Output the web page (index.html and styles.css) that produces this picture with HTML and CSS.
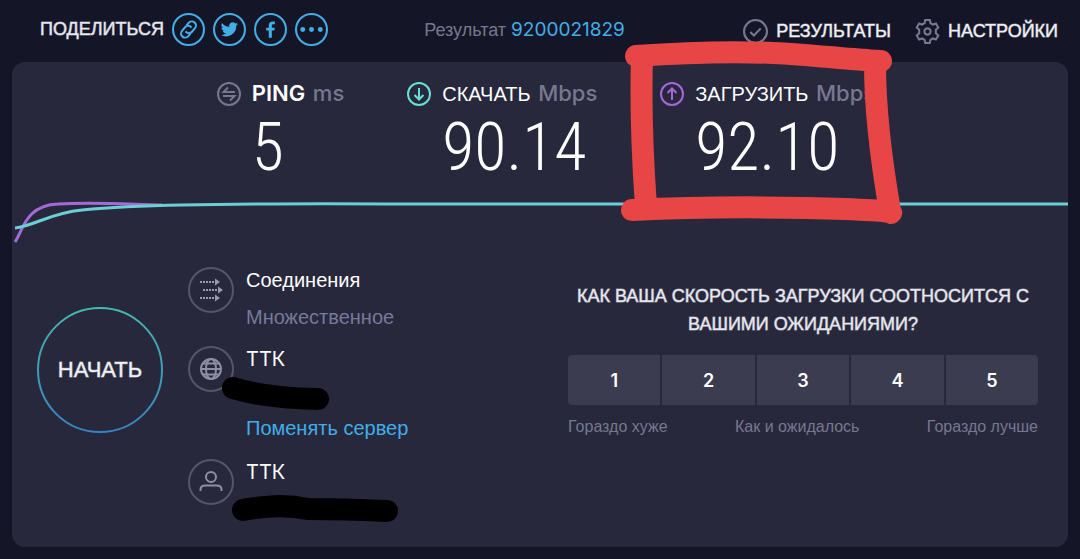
FILE: index.html
```html
<!DOCTYPE html>
<html lang="ru">
<head>
  <meta charset="UTF-8">
  <meta name="viewport" content="width=device-width, initial-scale=1.0">
  <title>Speedtest</title>
  <link rel="stylesheet" href="styles.css">
</head>
<body>
  <header class="topbar">
    <div class="share">
      <span class="share-title">ПОДЕЛИТЬСЯ</span>
      <a class="share-link" href="#" aria-label="Ссылка">
        <svg viewBox="0 0 32 32"><circle cx="16" cy="16" r="15"/><g transform="rotate(-50 16 16)"><path d="M14.500 20h-3.500a4 4 0 0 1 0-8h4.500a4 4 0 0 1 3.800 5"/><path d="M17.500 12h3.500a4 4 0 0 1 0 8h-4.500a4 4 0 0 1-3.800-5"/></g></svg>
      </a>
      <a class="share-link" href="#" aria-label="Twitter">
        <svg viewBox="0 0 32 32"><circle cx="16" cy="16" r="15"/><path class="solid" transform="translate(7.500 7.500) scale(.7)" d="M24 4.600a10 10 0 0 1-2.800.8 5 5 0 0 0 2.100-2.700 10 10 0 0 1-3.100 1.200A4.900 4.900 0 0 0 11.800 8.400 14 14 0 0 1 1.700 3.200a4.900 4.900 0 0 0 1.500 6.600 5 5 0 0 1-2.200-.6 4.900 4.900 0 0 0 3.900 4.900 5 5 0 0 1-2.200.1 4.900 4.900 0 0 0 4.600 3.400A9.900 9.900 0 0 1 0 19.500 14 14 0 0 0 21.500 7.100 10 10 0 0 0 24 4.600z"/></svg>
      </a>
      <a class="share-link" href="#" aria-label="Facebook">
        <svg viewBox="0 0 32 32"><circle cx="16" cy="16" r="15"/><path class="solid" d="M14.300 24v-7h-2.500v-2.800h2.500v-2c0-2.700 1.500-4 3.900-4l2 .1v2.600h-1.400c-1.200 0-1.500.6-1.500 1.400v1.900h2.900l-.4 2.800h-2.500v7z"/></svg>
      </a>
      <a class="share-link" href="#" aria-label="Ещё">
        <svg viewBox="0 0 32 32"><circle cx="16" cy="16" r="15"/><g class="solid"><circle cx="7.500" cy="16" r="2.400"/><circle cx="16" cy="16" r="2.400"/><circle cx="24.500" cy="16" r="2.400"/></g></svg>
      </a>
    </div>
    <div class="result-id">Результат <a href="#">9200021829</a></div>
    <nav class="menu">
      <a href="#">
        <svg viewBox="0 0 24 24"><circle cx="12" cy="12" r="11"/><path d="M7 12.500l3.500 3.300L17 9"/></svg>
        РЕЗУЛЬТАТЫ
      </a>
      <a href="#">
        <svg viewBox="0 0 24 24"><circle cx="12" cy="12" r="3"/><path d="M9.800 1h4.400l.6 3 2.300 1.300 3-1 2.200 3.800-2.300 2.100v3.600l2.300 2.100-2.200 3.800-3-1-2.300 1.300-.6 3H9.800l-.6-3-2.300-1.300-3 1-2.200-3.800L4 13.800v-3.600L1.700 8.100l2.200-3.800 3 1L9.200 4z"/></svg>
        НАСТРОЙКИ
      </a>
    </nav>
  </header>

  <main class="panel">
    <section class="metrics">
      <div class="metric ping">
        <svg class="metric-icon" viewBox="0 0 24 24"><circle cx="12" cy="12" r="11"/><path d="M18 10H6.500L11 5.500M6 14h11.500L13 18.500"/></svg>
        <h2><span class="latin">PING</span> <small>ms</small></h2>
        <div class="value">5</div>
      </div>
      <div class="metric download">
        <svg class="metric-icon" viewBox="0 0 24 24"><circle cx="12" cy="12" r="11"/><path d="M12 6v11.500M7.500 13l4.500 4.500 4.500-4.500"/></svg>
        <h2>СКАЧАТЬ <small>Mbps</small></h2>
        <div class="value">90.14</div>
      </div>
      <div class="metric upload">
        <svg class="metric-icon" viewBox="0 0 24 24"><circle cx="12" cy="12" r="11"/><path d="M12 18V6.500M7.500 11L12 6.500l4.500 4.500"/></svg>
        <h2>ЗАГРУЗИТЬ <small>Mbps</small></h2>
        <div class="value">92.10</div>
        <svg class="marker" viewBox="0 0 300 200"><path d="M21 22Q120 15 190 21T266 27M27 23Q25 90 31 172M260 30C260 70 266 125 275 177M17 176Q100 172 190 174T276 179"/></svg>
      </div>
    </section>

    <svg class="chart" viewBox="0 0 1056 44" preserveAspectRatio="none">
      <path class="line-upload" d="M3 42C11 30 14 5 46 4C80 2 110 4 150 5"/>
      <path class="line-download" d="M3 28C22 26 38 13 70 10Q110 6 170 5Q260 3 400 4T1056 4"/>
    </svg>

    <section class="details">
      <button class="start" type="button">
        <svg viewBox="0 0 128 128">
          <defs><linearGradient id="ring" x1="0" y1="0" x2="0" y2="1"><stop offset="0" stop-color="#43b8ac"/><stop offset="1" stop-color="#3484c4"/></linearGradient></defs>
          <circle cx="64" cy="64" r="62"/>
        </svg>
        <span>НАЧАТЬ</span>
      </button>

      <ul class="info">
        <li>
          <svg class="info-icon" viewBox="0 0 46 46"><circle cx="23" cy="23" r="22"/><path class="dots" d="M12 15h15M15 23h15M12 31h15"/><path class="tips" d="M27 11.500l5 3.500-5 3.500zM30 19.500l5 3.500-5 3.500zM27 27.500l5 3.500-5 3.500z"/></svg>
          <div>
            <h3>Соединения</h3>
            <p>Множественное</p>
          </div>
        </li>
        <li>
          <svg class="info-icon" viewBox="0 0 46 46"><circle cx="23" cy="23" r="22"/><g class="glyph"><circle cx="23" cy="23" r="10"/><ellipse cx="23" cy="23" rx="5" ry="10"/><path d="M13 23h20M15 17.500h16M15 28.500h16"/></g></svg>
          <div>
            <h3 class="latin">ТТК</h3>
            <p class="redacted"><svg viewBox="0 0 180 40"><path d="M19 14Q52 24 104 25"/></svg></p>
            <a href="#">Поменять сервер</a>
          </div>
        </li>
        <li>
          <svg class="info-icon" viewBox="0 0 46 46"><circle cx="23" cy="23" r="22"/><g class="glyph"><circle cx="23" cy="18" r="5"/><path d="M12.500 32v-1.500q0-4 5-4h11q5 0 5 4V32"/></g></svg>
          <div>
            <h3 class="latin">ТТК</h3>
            <p class="redacted"><svg viewBox="0 0 180 40"><path d="M29 23C50 19 70 17 94 22Q130 22 173 24"/></svg></p>
          </div>
        </li>
      </ul>

      <div class="survey">
        <h3>КАК ВАША СКОРОСТЬ ЗАГРУЗКИ СООТНОСИТСЯ С ВАШИМИ ОЖИДАНИЯМИ?</h3>
        <div class="scale">
          <button type="button">1</button>
          <button type="button">2</button>
          <button type="button">3</button>
          <button type="button">4</button>
          <button type="button">5</button>
        </div>
        <div class="scale-labels">
          <span>Гораздо хуже</span>
          <span>Как и ожидалось</span>
          <span>Гораздо лучше</span>
        </div>
      </div>
    </section>
  </main>
</body>
</html>
```
FILE: styles.css
```css
* {
  box-sizing: border-box;
}

body {
  margin: 0;
  padding: 0 12px 12px;
  background: #141526;
  color: #fff;
  font-family: "Liberation Sans", Arial, sans-serif;
}

a {
  color: #41aee8;
  text-decoration: none;
}

h2, h3, p, ul {
  margin: 0;
  padding: 0;
}

svg {
  display: block;
  fill: none;
  stroke: currentColor;
}

.latin,
small,
.result-id a {
  font-family: Inter, sans-serif;
}

/* slightly heavier capitals */
.share-title,
.menu a,
.start span,
.survey h3 {
  -webkit-text-stroke: 1px rgba(240, 240, 246, 0.5);
}

/* top bar */
.topbar {
  display: flex;
  align-items: center;
  height: 62px;
  padding: 0 10px 4px 28px;
}

.share {
  display: flex;
  align-items: center;
  gap: 8px;
  color: #e6e6ee;
  font-size: 18px;
}

.share-link svg {
  width: 33px;
  height: 33px;
  stroke-width: 2;
}

.share-link .solid {
  fill: currentColor;
  stroke: none;
}

.result-id {
  flex: 1;
  padding-right: 22px;
  color: #77788f;
  font-size: 18px;
  text-align: center;
}

.result-id a {
  font-size: 19px;
}

.menu {
  display: flex;
  gap: 24px;
  padding-top: 4px;
}

.menu a {
  display: flex;
  align-items: center;
  gap: 8px;
  color: #f0f0f6;
  font-size: 18px;
}

.menu svg {
  width: 25px;
  height: 25px;
  color: #777990;
  stroke-width: 2;
}

/* main panel */
.panel {
  padding: 18px 0 17px;
  border-radius: 13px;
  background: #27283c;
}

.metrics {
  display: flex;
  justify-content: center;
  gap: 63px;
  padding-left: 12px;
}

.metric {
  position: relative;
  display: grid;
  grid-template-columns: 24px auto;
  column-gap: 11px;
  align-items: center;
}

.metric-icon {
  width: 24px;
  height: 24px;
  stroke-width: 2;
}

.metric h2 {
  font-size: 20px;
  font-weight: 400;
  line-height: 27px;
}

.metric .latin {
  font-size: 22px;
  font-weight: 600;
}

.metric small {
  margin-left: 2px;
  color: #77788f;
  font-size: 22px;
  font-weight: 500;
}

.value {
  grid-column: 2;
  font-family: "Roboto Condensed", "Liberation Sans Narrow", Roboto, sans-serif;
  font-size: 66px;
  font-weight: 300;
  line-height: 80px;
}

.ping .metric-icon {
  color: #77788f;
}

.download .metric-icon {
  color: #6adfd6;
}

.upload .metric-icon {
  color: #a767dc;
}

.marker {
  position: absolute;
  z-index: 1;
  top: -46px;
  left: -45px;
  width: 300px;
  height: 200px;
  color: #e84646;
  stroke-width: 22;
  stroke-linecap: round;
  stroke-linejoin: round;
}

.chart {
  width: 100%;
  height: 44px;
  margin-top: 12px;
  stroke-width: 3;
}

.line-upload {
  stroke: #a46bd8;
}

.line-download {
  stroke: #6dcfd6;
}

.details {
  display: flex;
  align-items: flex-start;
  padding: 18px 30px 0 24px;
}

.start {
  display: grid;
  place-items: center;
  width: 128px;
  height: 128px;
  margin-top: 44px;
  padding: 0;
  border: 0;
  border-radius: 50%;
  background: none;
  color: #f0f0f4;
  font: 22px "Liberation Sans", Arial, sans-serif;
}

.start svg,
.start span {
  grid-area: 1 / 1;
}

.start svg {
  width: 100%;
  stroke: url(#ring);
  stroke-width: 2;
}

.info {
  flex: 1;
  padding-left: 24px;
  list-style: none;
  font-size: 20px;
  line-height: 37px;
}

.info li {
  display: flex;
  gap: 12px;
  margin-bottom: 7px;
}

.info h3 {
  font-size: 20px;
  font-weight: 400;
}

.info p {
  height: 35px;
  color: #77799a;
}

.info-icon {
  width: 46px;
  height: 46px;
  margin-top: 5px;
  color: #55566c;
  stroke-width: 2;
}

.info-icon .dots {
  stroke: #9a9bb0;
  stroke-dasharray: 2 1;
}

.info-icon .tips {
  fill: #9a9bb0;
  stroke: none;
}

.info-icon .glyph {
  stroke: #8e8fa5;
}

.info .redacted {
  position: relative;
  height: 32px;
}

.redacted svg {
  position: absolute;
  top: -4px;
  left: -32px;
  width: 180px;
  height: 40px;
  overflow: visible;
  color: #000;
  stroke-width: 22;
  stroke-linecap: round;
}

/* survey */
.survey {
  width: 470px;
  padding-top: 20px;
}

.survey h3 {
  color: #e4e4ec;
  font-size: 18px;
  font-weight: 400;
  line-height: 28px;
  text-align: center;
}

.scale {
  display: grid;
  grid-template-columns: repeat(5, 1fr);
  gap: 2px;
  margin-top: 17px;
  overflow: hidden;
  border-radius: 4px;
}

.scale button {
  height: 50px;
  border: 0;
  background: #3b3c50;
  color: #fff;
  font: 600 18px Inter, sans-serif;
}

.scale-labels {
  display: flex;
  justify-content: space-between;
  margin-top: 13px;
  color: #77788f;
  font-size: 16px;
}
```
